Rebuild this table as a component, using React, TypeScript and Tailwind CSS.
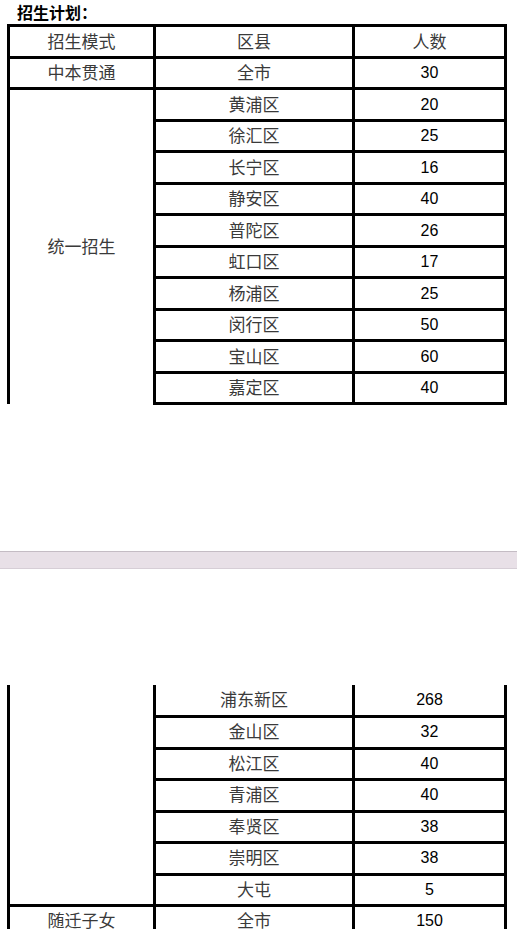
import type { ReactNode } from "react";

const cjk = "font-['Noto_Sans_CJK_SC',sans-serif] text-[17px] text-[#3a3a3a] pb-[3px]";
const num = "font-['Liberation_Sans',Arial,sans-serif] text-[16px] text-black";

const topRows = [
  ["黄浦区", "20"],
  ["徐汇区", "25"],
  ["长宁区", "16"],
  ["静安区", "40"],
  ["普陀区", "26"],
  ["虹口区", "17"],
  ["杨浦区", "25"],
  ["闵行区", "50"],
  ["宝山区", "60"],
  ["嘉定区", "40"],
];

const bottomRows = [
  ["浦东新区", "268"],
  ["金山区", "32"],
  ["松江区", "40"],
  ["青浦区", "40"],
  ["奉贤区", "38"],
  ["崇明区", "38"],
  ["大屯", "5"],
];

const Cell = ({
  children,
  className = "",
  rowSpan,
}: {
  children?: ReactNode;
  className?: string;
  rowSpan?: number;
}) => (
  <td
    rowSpan={rowSpan}
    className={`border-[3px] border-black text-center align-middle p-0 leading-none ${className}`}
  >
    {children}
  </td>
);

const Cols = () => (
  <colgroup>
    <col className="w-[146px]" />
    <col className="w-[199px]" />
    <col className="w-[152px]" />
  </colgroup>
);

const App = () => {
  return (
    <div className="h-[929px] w-[517px] overflow-hidden bg-white">
      {/* page 1 */}
      <div className="h-[551px] bg-white">
        <div className="h-[24px] pl-[17px] pt-[1px] font-['Noto_Sans_CJK_SC',sans-serif] text-[16px] font-bold leading-[22px] text-black">
          招生计划：
        </div>
        <table className="ml-[7px] table-fixed">
          <Cols />
          <tbody>
            <tr className="h-[32px]">
              <Cell className={cjk}>招生模式</Cell>
              <Cell className={cjk}>区县</Cell>
              <Cell className={cjk}>人数</Cell>
            </tr>
            <tr className="h-[31px]">
              <Cell className={cjk}>中本贯通</Cell>
              <Cell className={cjk}>全市</Cell>
              <Cell className={num}>30</Cell>
            </tr>
            {topRows.map(([district, count], i) => (
              <tr key={district} className={i % 2 === 0 ? "h-[32px]" : "h-[31px]"}>
                {i === 0 && (
                  <Cell rowSpan={topRows.length} className={`${cjk} border-b-0`}>
                    统一招生
                  </Cell>
                )}
                <Cell className={cjk}>{district}</Cell>
                <Cell className={num}>{count}</Cell>
              </tr>
            ))}
          </tbody>
        </table>
      </div>

      {/* page gap */}
      <div className="h-[18px] border-y border-t-[#c4bcc4] border-b-[#d6ced6] bg-[#e8e0e7]" />

      {/* page 2 */}
      <div className="bg-white pt-[116px]">
        <table className="ml-[7px] table-fixed">
          <Cols />
          <tbody>
            {bottomRows.map(([district, count], i) => (
              <tr key={district} className={i % 2 === 0 ? "h-[31px]" : "h-[32px]"}>
                {i === 0 && <Cell rowSpan={bottomRows.length} className="border-t-0" />}
                <Cell className={`${cjk} ${i === 0 ? "border-t-0" : ""}`}>{district}</Cell>
                <Cell className={`${num} ${i === 0 ? "border-t-0" : ""}`}>{count}</Cell>
              </tr>
            ))}
            <tr className="h-[32px]">
              <Cell className={cjk}>随迁子女</Cell>
              <Cell className={cjk}>全市</Cell>
              <Cell className={num}>150</Cell>
            </tr>
          </tbody>
        </table>
      </div>
    </div>
  );
};

export default App;
